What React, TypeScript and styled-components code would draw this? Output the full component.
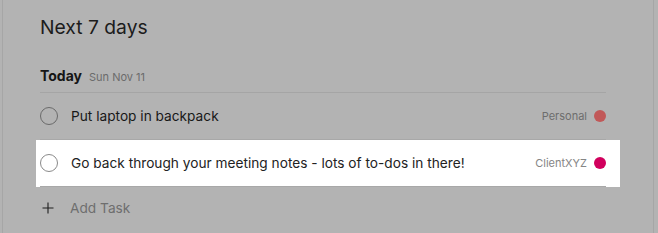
import React, { FC } from "react";
import styled, { createGlobalStyle } from "styled-components";

const GlobalStyle = createGlobalStyle`
  html, body {
    margin: 0;
    padding: 0;
    background: #b3b3b3;
    font-family: Inter, "Noto Sans", "Liberation Sans", sans-serif;
  }
`;

const Panel = styled.div`
  margin-left: 2px;
  width: 652px;
  height: 233px;
  box-sizing: border-box;
  border-left: 1px solid #a6a6a6;
  border-right: 1px solid #a6a6a6;
  padding: 15px 47px 0 37px;
  overflow: hidden;
`;

const Title = styled.h1`
  margin: 0;
  font-size: 19.3px;
  line-height: 24px;
  font-weight: 400;
  color: #1c1c1c;
`;

const SectionHeader = styled.div`
  display: flex;
  align-items: baseline;
  gap: 7px;
  margin-top: 27px;
  padding-bottom: 5px;
  line-height: 20px;
  border-bottom: 1px solid #a5a5a5;
`;

const SectionTitle = styled.span`
  font-size: 14px;
  font-weight: 700;
  color: #161616;
`;

const SectionDate = styled.span`
  font-size: 11px;
  color: #6b6b6b;
`;

const Highlight = styled.div<{ $on?: boolean }>`
  margin: 0 ${(p) => (p.$on ? "-14px" : "0")} 0 ${(p) => (p.$on ? "-4px" : "0")};
  padding: 0 ${(p) => (p.$on ? "14px" : "0")} 0 ${(p) => (p.$on ? "4px" : "0")};
  background: ${(p) => (p.$on ? "#ffffff" : "transparent")};
`;

const Row = styled.div`
  display: flex;
  align-items: center;
  height: 46px;
  border-bottom: 1px solid #a8a8a8;
`;

const Check = styled.span<{ $on?: boolean }>`
  width: 18px;
  height: 18px;
  box-sizing: border-box;
  border-radius: 50%;
  border: 1px solid ${(p) => (p.$on ? "#8a8a8a" : "#6a6a6a")};
  flex-shrink: 0;
`;

const TaskText = styled.span<{ $on?: boolean }>`
  margin-left: 13px;
  flex: 1;
  font-size: 13.7px;
  color: ${(p) => (p.$on ? "#222222" : "#181818")};
`;

const Project = styled.span<{ $on?: boolean }>`
  font-size: 11px;
  color: ${(p) => (p.$on ? "#858585" : "#6d6d6d")};
`;

const Dot = styled.span<{ $color: string }>`
  width: 12px;
  height: 12px;
  margin-left: 7px;
  border-radius: 50%;
  background: ${(p) => p.$color};
`;

const AddRow = styled.div`
  display: flex;
  align-items: center;
  height: 42px;
  padding-left: 2px;
`;

const AddText = styled.span`
  margin-left: 16px;
  font-size: 13.7px;
  color: #6e6e6e;
`;

const PlusIcon: FC = () => (
  <svg width="12" height="12" viewBox="0 0 12 12">
    <path d="M6 0.5v11M0.5 6h11" stroke="#1e1e1e" strokeWidth="1.1" fill="none" />
  </svg>
);

const tasks = [
  { id: 1, text: "Put laptop in backpack", project: "Personal", color: "#c15858", on: false },
  {
    id: 2,
    text: "Go back through your meeting notes - lots of to-dos in there!",
    project: "ClientXYZ",
    color: "#d1005d",
    on: true,
  },
];

const App: FC = () => (
  <>
    <GlobalStyle />
    <Panel>
      <Title>Next 7 days</Title>
      <SectionHeader>
        <SectionTitle>Today</SectionTitle>
        <SectionDate>Sun Nov 11</SectionDate>
      </SectionHeader>
      {tasks.map((t) => (
        <Highlight key={t.id} $on={t.on}>
          <Row>
            <Check $on={t.on} />
            <TaskText $on={t.on}>{t.text}</TaskText>
            <Project $on={t.on}>{t.project}</Project>
            <Dot $color={t.color} />
          </Row>
        </Highlight>
      ))}
      <AddRow>
        <PlusIcon />
        <AddText>Add Task</AddText>
      </AddRow>
    </Panel>
  </>
);

export default App;
